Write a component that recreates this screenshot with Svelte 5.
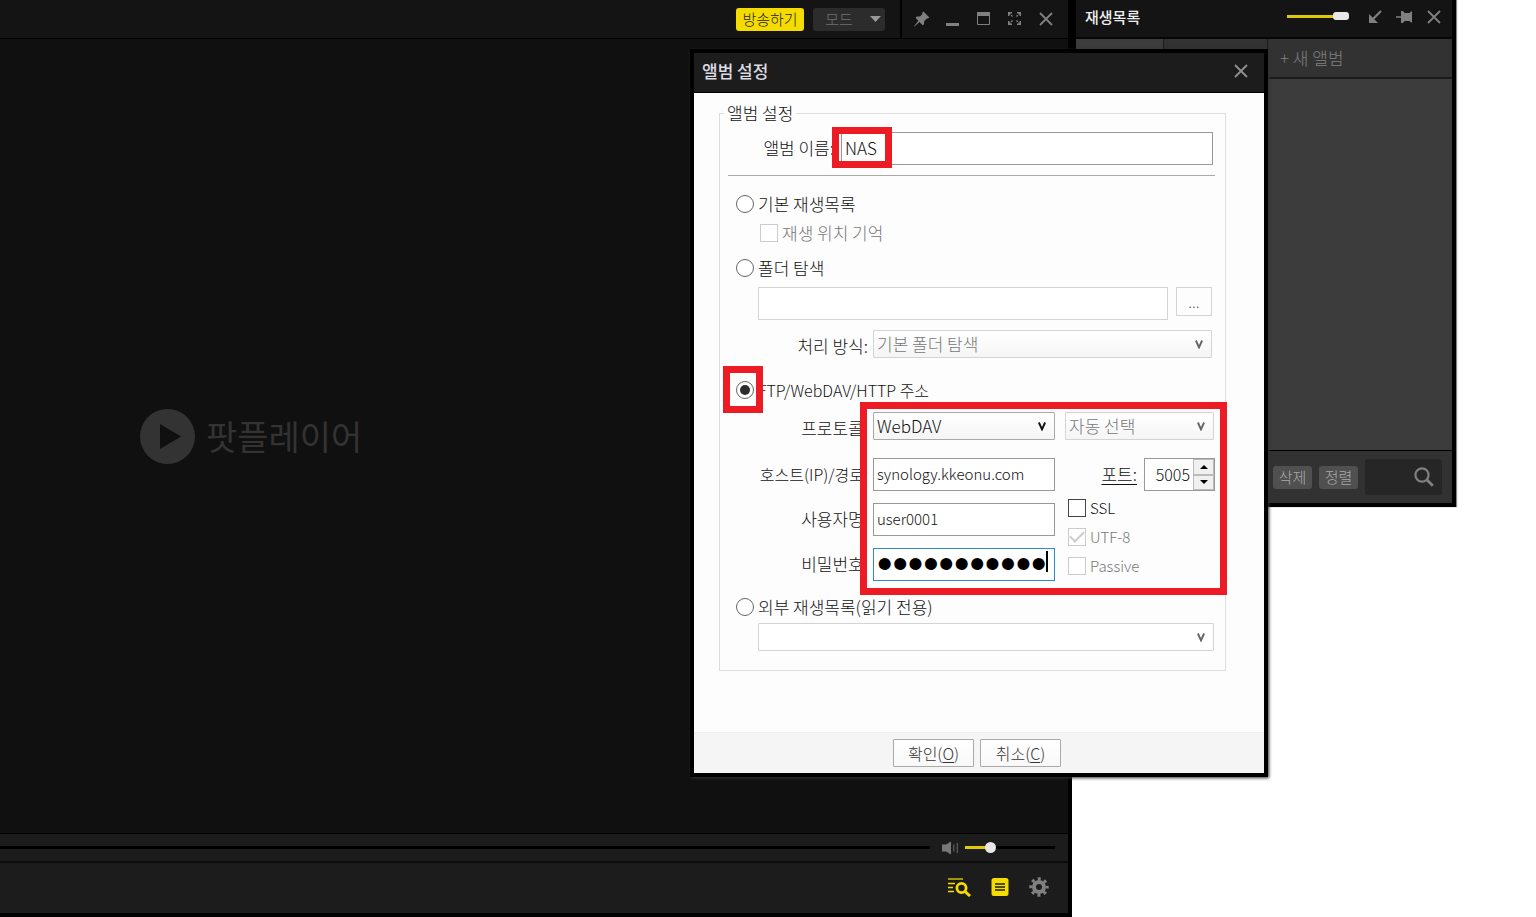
<script lang="ts">
	let source = $state('remote');
	let albumName = $state('NAS');
	let folderPath = $state('');
	let protocol = $state('WebDAV');
	let host = $state('synology.kkeonu.com');
	let port = $state(5005);
	let user = $state('user0001');
	let password = $state('abcdefghijk');
	let ssl = $state(false);
</script>

{#snippet cross()}
	<svg width="16" height="16" viewBox="0 0 16 16" fill="none" stroke="currentColor" stroke-width="1.8">
		<path d="M2 2l12 12M14 2L2 14" />
	</svg>
{/snippet}

{#snippet chevron()}
	<svg class="chevron" width="8" height="9" viewBox="0 0 8 9" fill="none" stroke="currentColor" stroke-width="1.9">
		<path d="M0.9 0.5L4 7.4L7.1 0.5" />
	</svg>
{/snippet}

<div class="desktop">
	<!-- player -->
	<main class="player">
		<header class="titlebar">
			<button class="live">방송하기</button>
			<button class="mode">
				<span>모드</span>
				<svg width="11" height="6" viewBox="0 0 11 6" fill="#999"><path d="M0 0h11L5.5 6z" /></svg>
			</button>
			<div class="controls">
				<button aria-label="항상 위">
					<svg width="16" height="16" viewBox="0 0 16 16" fill="currentColor">
						<path d="M9.4 0.6L15.4 6.4L13.8 7.6L12.8 7.4L10.2 10.2L10 13.2L8.6 14.2L5.4 11L0.6 15.4L0.2 15L4.4 9.8L1.6 7L2.8 5.6L6 5.6L8.4 3L8.2 1.8z" />
					</svg>
				</button>
				<button aria-label="최소화">
					<svg width="16" height="16" viewBox="0 0 16 16" fill="currentColor"><path d="M1 12h13v3H1z" /></svg>
				</button>
				<button aria-label="최대화">
					<svg width="16" height="16" viewBox="0 0 16 16" fill="none" stroke="currentColor">
						<path d="M1.5 1.5h12v12h-12z" /><path d="M1 3h13" stroke-width="4" />
					</svg>
				</button>
				<button aria-label="전체 화면">
					<svg width="16" height="16" viewBox="0 0 16 16" fill="none" stroke="currentColor" stroke-width="1.4">
						<path d="M1.7 5V1.7H5M10 1.7h3.3V5M13.3 10v3.3H10M5 13.3H1.7V10" />
						<path d="M2 2l4 4M13 2L9 6M13 13L9 9M2 13l4-4" stroke-dasharray="2 1" />
					</svg>
				</button>
				<button aria-label="닫기">{@render cross()}</button>
			</div>
		</header>

		<div class="video">
			<svg width="55" height="55" viewBox="0 0 55 55">
				<circle cx="27.5" cy="27.5" r="27.5" fill="#333" />
				<path d="M20 15l21 12.5L20 40z" fill="#101010" />
			</svg>
			<span>팟플레이어</span>
		</div>

		<div class="seek">
			<input class="seekbar" type="range" min="0" max="100" value="0" aria-label="재생 위치" />
			<svg width="17" height="14" viewBox="0 0 17 14" fill="#777">
				<path d="M0 3.5h4L9 0.5v13L4 10.5H0z" />
				<path d="M11 3.5h1.4v7H11zM14.6 2h1.4v10h-1.4z" fill="#555" />
			</svg>
			<input class="volume" type="range" min="0" max="100" value="25" aria-label="음량" />
		</div>

		<footer class="toolbar">
			<button class="yellow" aria-label="찾기">
				<svg width="24" height="20" viewBox="0 0 24 20" fill="none" stroke="currentColor">
					<path d="M1 2h15" stroke="#a39406" stroke-width="2" />
					<path d="M1 6.5h7M1 10.5h5M1 14.5h6" stroke-width="1.4" />
					<circle cx="14.5" cy="11" r="4.6" stroke-width="2.8" />
					<path d="M18 14.5l5 4.5" stroke-width="3" />
				</svg>
			</button>
			<button class="yellow" aria-label="재생목록">
				<svg width="18" height="18" viewBox="0 0 18 18" fill="currentColor">
					<rect x="0.5" width="17" height="18" rx="2.5" />
					<path d="M4 6h10M4 9h10M4 12h10" stroke="#1c1c1c" stroke-width="1.5" />
				</svg>
			</button>
			<button aria-label="환경 설정">
				<svg width="20" height="20" viewBox="0 0 20 20" fill="none" stroke="currentColor">
					<circle cx="10" cy="10" r="8.2" stroke-width="3" stroke-dasharray="3 3.44" stroke-dashoffset="1.5" />
					<circle cx="10" cy="10" r="5" stroke-width="4" />
				</svg>
			</button>
		</footer>
	</main>

	<!-- playlist -->
	<aside class="playlist">
		<header class="list-title">
			<strong>재생목록</strong>
			<input class="opacity" type="range" min="0" max="100" value="100" aria-label="투명도" />
			<button aria-label="접기">
				<svg width="14" height="14" viewBox="0 0 14 14" fill="none" stroke="currentColor" stroke-width="2.2">
					<path d="M13 1L4 10" /><path d="M1 4v9h9z" fill="currentColor" stroke="none" />
				</svg>
			</button>
			<button aria-label="고정">
				<svg width="16" height="14" viewBox="0 0 16 14" fill="currentColor">
					<path d="M0 6.3h5V1h2l1.5 2h5L15 1.5h1v11h-1L13.5 11h-5L7 13H5V7.7H0z" />
				</svg>
			</button>
			<button aria-label="닫기">{@render cross()}</button>
		</header>
		<nav class="tabs">
			<button class="active" aria-label="기본 앨범"></button>
			<button aria-label="앨범"></button>
			<button class="new">+ 새 앨범</button>
		</nav>
		<div class="items"></div>
		<footer class="list-tools">
			<button>삭제</button>
			<button>정렬</button>
			<button class="search" aria-label="검색">
				<svg width="20" height="20" viewBox="0 0 20 20" fill="none" stroke="currentColor">
					<circle cx="8" cy="8" r="6.6" stroke-width="2.2" /><path d="M12.8 12.8l6 6" stroke-width="2.8" />
				</svg>
			</button>
		</footer>
	</aside>

	<!-- album settings -->
	<div class="dialog" role="dialog" aria-labelledby="dialog-title">
		<header class="dialog-title">
			<strong id="dialog-title">앨범 설정</strong>
			<button aria-label="닫기">{@render cross()}</button>
		</header>

		<fieldset>
			<legend>앨범 설정</legend>

			<div class="row name">
				<label for="album">앨범 이름:</label>
				<input id="album" type="text" bind:value={albumName} />
			</div>
			<hr />

			<label class="choice basic"><input type="radio" value="basic" bind:group={source} />기본 재생목록</label>
			<label class="choice remember off"><input type="checkbox" disabled />재생 위치 기억</label>
			<label class="choice folder"><input type="radio" value="folder" bind:group={source} />폴더 탐색</label>
			<div class="row browse">
				<input type="text" aria-label="폴더" bind:value={folderPath} disabled />
				<button disabled>...</button>
			</div>
			<div class="row method">
				<label for="method">처리 방식:</label>
				<div class="select off">
					<select id="method" disabled><option>기본 폴더 탐색</option></select>
					{@render chevron()}
				</div>
			</div>

			<label class="choice remote"><input type="radio" value="remote" bind:group={source} />FTP/WebDAV/HTTP 주소</label>
			<div class="row protocol">
				<label for="protocol">프로토콜:</label>
				<div class="select">
					<select id="protocol" bind:value={protocol}>
						<option>FTP</option>
						<option>WebDAV</option>
						<option>HTTP</option>
					</select>
					{@render chevron()}
				</div>
				<div class="select off">
					<select aria-label="인코딩" disabled><option>자동 선택</option></select>
					{@render chevron()}
				</div>
			</div>

			<div class="server">
				<div class="login">
					<label class="host" for="host">호스트(IP)/경로:</label>
					<input id="host" type="text" bind:value={host} />
					<label for="user">사용자명:</label>
					<input id="user" type="text" bind:value={user} />
					<label for="password">비밀번호:</label>
					<div class="password">
						<input id="password" type="password" bind:value={password} />
						<span class="caret"></span>
					</div>
				</div>
				<div class="options">
					<div class="port">
						<label for="port">포트:</label>
						<div class="spinner">
							<input id="port" type="number" bind:value={port} />
							<div class="steps">
								<button aria-label="증가" onclick={() => port++}>
									<svg width="8" height="4" viewBox="0 0 8 4"><path d="M0 4h8L4 0z" /></svg>
								</button>
								<button aria-label="감소" onclick={() => port--}>
									<svg width="8" height="4" viewBox="0 0 8 4"><path d="M0 0h8L4 4z" /></svg>
								</button>
							</div>
						</div>
					</div>
					<label class="choice"><input type="checkbox" bind:checked={ssl} />SSL</label>
					<label class="choice off"><input type="checkbox" checked disabled />UTF-8</label>
					<label class="choice off"><input type="checkbox" disabled />Passive</label>
				</div>
			</div>

			<label class="choice external"><input type="radio" value="external" bind:group={source} />외부 재생목록(읽기 전용)</label>
			<div class="select off list">
				<select aria-label="외부 재생목록" disabled><option></option></select>
				{@render chevron()}
			</div>
		</fieldset>

		<footer class="actions">
			<button>확인(<u>O</u>)</button>
			<button>취소(<u>C</u>)</button>
		</footer>

		<div class="mark mark-name"></div>
		<div class="mark mark-radio"></div>
		<div class="mark mark-server"></div>
	</div>
</div>

<style>
	:global(body) {
		margin: 0;
		background: #fff;
	}

	* {
		box-sizing: border-box;
	}

	.desktop {
		position: relative;
		min-height: 100vh;
		overflow: hidden;
		font-family: 'Noto Sans CJK KR', sans-serif;
		font-size: 17px;
		font-weight: 300;
		line-height: 24px;
	}

	button,
	input,
	select {
		margin: 0;
		padding: 0;
		font: inherit;
		color: inherit;
	}

	button {
		display: flex;
		align-items: center;
		justify-content: center;
		border: 0;
		background: none;
	}

	svg {
		display: block;
		flex: none;
	}

	/* sliders */
	input[type='range'] {
		appearance: none;
		height: 12px;
		background: none;
	}

	input[type='range']::-webkit-slider-runnable-track {
		height: 3px;
		background: #000;
	}

	input[type='range']::-webkit-slider-thumb {
		appearance: none;
		background: #e8e8e8;
	}

	/* player window */
	.player {
		display: flex;
		flex-direction: column;
		width: calc(100% - 464px);
		height: 100vh;
		border: solid #000;
		border-width: 0 4px 4px 0;
		background: #101010;
		color: #808080;
	}

	.titlebar {
		display: flex;
		align-items: center;
		justify-content: flex-end;
		height: 39px;
		border-bottom: 1px solid #000;
		background: #141414;
		font-size: 15px;
	}

	.live {
		width: 68px;
		height: 23px;
		margin-right: 9px;
		border-radius: 3px;
		background: #f5dc00;
		color: #222;
	}

	.mode {
		gap: 17px;
		width: 72px;
		height: 23px;
		padding-left: 8px;
		margin-right: 15px;
		border-radius: 3px;
		background: #2c2c2c;
		color: #707070;
	}

	.controls {
		display: flex;
		align-items: center;
		gap: 15px;
		height: 100%;
		padding: 0 14px 0 12px;
		border-left: 2px solid #000;
	}

	.video {
		display: flex;
		flex: 1;
		align-items: center;
		gap: 11px;
		padding-left: 140px;
		color: #333;
		font-size: 34px;
		font-weight: 400;
	}

	.seek {
		display: flex;
		align-items: center;
		height: 28px;
		border-top: 1px solid #000;
		background: #1c1c1c;
	}

	.seekbar {
		flex: 1;
		margin-right: 12px;
	}

	input.seekbar::-webkit-slider-thumb {
		width: 0;
		height: 0;
	}

	.volume {
		width: 90px;
		margin: 0 13px 0 6px;
	}

	input.volume[type='range']::-webkit-slider-runnable-track {
		background: linear-gradient(to right, #e0ca08 28%, #000 28%);
	}

	input.volume::-webkit-slider-thumb {
		width: 11px;
		height: 11px;
		margin-top: -4px;
		border-radius: 50%;
	}

	.toolbar {
		display: flex;
		align-items: center;
		justify-content: flex-end;
		gap: 20px;
		height: 52px;
		padding: 0 19px 2px 0;
		border-top: 2px solid #0c0c0c;
		background: #1c1c1c;
	}

	.yellow {
		color: #f5dc00;
	}

	/* playlist window */
	.playlist {
		position: absolute;
		top: 0;
		right: 80px;
		display: flex;
		flex-direction: column;
		width: 384px;
		height: 507px;
		border: solid #000;
		border-width: 0 4px 4px;
		background: #3c3c3c;
		color: #808080;
		box-shadow: 1px 0 1px #888;
	}

	.list-title {
		display: flex;
		align-items: center;
		height: 39px;
		padding: 0 10px 4px 9px;
		gap: 14px;
		border-bottom: 2px solid #060606;
		background: #141414;
		font-size: 15px;
	}

	.list-title strong {
		flex: 1;
		color: #eee;
		font-weight: 500;
	}

	.opacity {
		width: 62px;
		margin-right: 5px;
	}

	input.opacity[type='range']::-webkit-slider-runnable-track {
		background: #e0ca08;
	}

	input.opacity::-webkit-slider-thumb {
		width: 16px;
		height: 8px;
		margin-top: -3px;
		border-radius: 3px;
	}

	.tabs {
		display: flex;
		height: 40px;
		border-bottom: 2px solid #1c1c1c;
		background: #323232;
	}

	.tabs button {
		width: 104px;
		border-right: 1px solid #1c1c1c;
	}

	.tabs .active {
		width: 88px;
		background: #3c3c3c;
	}

	.tabs .new {
		flex: 1;
		justify-content: flex-start;
		padding-left: 12px;
		border: 0;
	}

	.items {
		flex: 1;
	}

	.list-tools {
		display: flex;
		align-items: center;
		justify-content: flex-end;
		gap: 7px;
		height: 53px;
		padding-right: 10px;
		border-top: 1px solid #000;
		background: #323232;
		font-size: 15px;
	}

	.list-tools button {
		width: 39px;
		height: 23px;
		border-radius: 3px;
		background: #505050;
		color: #aaa;
	}

	.list-tools .search {
		justify-content: flex-end;
		width: 77px;
		height: 36px;
		padding-right: 8px;
		background: #262626;
		color: #808080;
	}

	/* dialog */
	.dialog {
		position: absolute;
		top: 49px;
		right: 268px;
		width: 578px;
		border: 4px solid #000;
		background: #fdfdfd;
		color: #111;
		box-shadow: 1px 1px 3px #333;
	}

	.dialog-title {
		display: flex;
		align-items: center;
		justify-content: space-between;
		height: 40px;
		padding: 0 15px 4px 8px;
		border-bottom: 1px solid #000;
		background: #1c1c1c;
		color: #909090;
	}

	.dialog-title strong {
		color: #dcdce4;
		font-weight: 500;
	}

	fieldset {
		min-width: 0;
		margin: 8px 38px 61px 25px;
		padding: 0 10px 19px 8px;
		border: 1px solid #ddd;
	}

	legend {
		margin-left: -4px;
		padding: 0 3px;
	}

	.row {
		display: flex;
	}

	.row label,
	.login label {
		text-align: right;
		white-space: nowrap;
		line-height: 32px;
	}

	input[type='text'],
	input[type='password'],
	input[type='number'] {
		min-width: 0;
		height: 33px;
		padding: 0 3px 2px;
		border: 1px solid #999;
		border-radius: 0;
		outline: 0;
		background: #fff;
	}

	input[type='text']:disabled {
		border-color: #d4d4d4;
	}

	.name {
		gap: 7px;
		margin-top: 7px;
		padding-right: 2px;
	}

	.name label {
		width: 106px;
	}

	.name input {
		flex: 1;
	}

	hr {
		margin: 10px 0 0;
		border: 0;
		border-top: 1px solid #aaa;
	}

	.choice {
		display: flex;
		align-items: center;
		gap: 4px;
		height: 24px;
		padding-left: 8px;
	}

	.choice.off {
		color: #777;
	}

	.choice input {
		display: grid;
		place-items: center;
		appearance: none;
		width: 18px;
		height: 18px;
		border: 1px solid #444;
		background: #fff;
	}

	.choice input[type='radio'] {
		border-color: #666;
		border-radius: 50%;
	}

	.choice input[type='radio']:checked::before {
		width: 10px;
		height: 10px;
		border-radius: 50%;
		background: #2c2c2c;
		content: '';
	}

	.choice input:disabled {
		border-color: #ccc;
	}

	.choice input[type='checkbox']:checked::before {
		width: 12px;
		height: 6px;
		border: solid #ccc;
		border-width: 0 0 2px 2px;
		transform: translateY(-2px) rotate(-45deg);
		content: '';
	}

	.basic {
		margin-top: 16px;
	}

	.remember {
		margin-top: 5px;
		padding-left: 32px;
	}

	.folder {
		margin-top: 11px;
	}

	.browse {
		gap: 8px;
		margin-top: 7px;
		padding: 0 3px 0 30px;
	}

	.browse input {
		flex: 1;
	}

	.browse button {
		width: 36px;
		height: 29px;
		border: 1px solid #d4d4d4;
		color: #555;
		font-size: 15px;
	}

	.select {
		position: relative;
		height: 28px;
	}

	.select select {
		display: block;
		appearance: none;
		width: 100%;
		height: 100%;
		padding: 0 20px 0 3px;
		border: 1px solid #aaa;
		border-radius: 1px;
		background: linear-gradient(#fff, #f5f5f5);
		opacity: 1;
	}

	.select.off {
		color: #777;
	}

	.select.off select {
		border-color: #d4d4d4;
	}

	.select :global(.chevron) {
		position: absolute;
		top: 10px;
		right: 9px;
	}

	.select.off :global(.chevron) {
		color: #666;
	}

	.method {
		gap: 5px;
		height: 28px;
		margin-top: 10px;
		padding-right: 3px;
	}

	.method label {
		width: 140px;
	}

	.method .select {
		flex: 1;
	}

	.remote {
		margin-top: 20px;
		font-size: 16px;
	}

	.protocol {
		display: grid;
		grid-template-columns: 140px 182px 1fr;
		column-gap: 5px;
		height: 28px;
		margin-top: 10px;
	}

	.protocol .off {
		margin: 0 1px 0 5px;
	}

	.server {
		display: flex;
		gap: 13px;
		margin-top: 18px;
	}

	.login {
		display: grid;
		grid-template-columns: 140px 182px;
		gap: 12px 5px;
	}

	.login .host {
		font-size: 16px;
	}

	.login input {
		font-size: 15px;
	}

	.password {
		position: relative;
	}

	.password input {
		display: block;
		width: 100%;
		border-color: #2a8ad4;
		color: #000;
		font-family: 'Liberation Sans', sans-serif;
		font-size: 44px;
	}

	.caret {
		position: absolute;
		top: 3px;
		right: 7px;
		width: 2px;
		height: 21px;
		background: #000;
	}

	.options {
		display: flex;
		flex: 1;
		flex-direction: column;
		gap: 5px;
	}

	.options .choice {
		padding: 0;
		font-size: 15px;
	}

	.port {
		display: flex;
		justify-content: flex-end;
		gap: 7px;
		line-height: 32px;
	}

	.port label {
		text-decoration: underline;
		text-underline-offset: 3px;
	}

	.spinner {
		display: flex;
		width: 71px;
		height: 33px;
		border: 1px solid #999;
	}

	.spinner input[type='number'] {
		flex: 1;
		height: 31px;
		border: 0;
		appearance: textfield;
		font-size: 16px;
		text-align: right;
	}

	.spinner input::-webkit-inner-spin-button {
		display: none;
	}

	.steps {
		display: flex;
		flex-direction: column;
		width: 21px;
	}

	.steps button {
		flex: 1;
		border: 1px solid #bbb;
		background: #f0f0f0;
	}

	.external {
		margin-top: 14px;
	}

	.list {
		margin: 4px 1px 0 30px;
	}

	.list select {
		background: #fff;
	}

	.actions {
		display: flex;
		justify-content: center;
		gap: 6px;
		height: 41px;
		padding: 6px 4px 0 0;
		border-top: 1px solid #eee;
		background: #f5f5f5;
		font-size: 16px;
	}

	.actions button {
		width: 81px;
		height: 28px;
		border: 1px solid #aaa;
		border-radius: 1px;
		background: linear-gradient(#fff, #f8f8f8);
		color: #333;
	}

	u {
		text-underline-offset: 2px;
	}

	/* red highlights over the filled-in fields */
	.mark {
		position: absolute;
		border: 7px solid #ed1c24;
		pointer-events: none;
	}

	.mark-name {
		top: 74px;
		left: 138px;
		width: 60px;
		height: 41px;
	}

	.mark-radio {
		top: 313px;
		left: 29px;
		width: 40px;
		height: 47px;
	}

	.mark-server {
		top: 349px;
		left: 166px;
		width: 367px;
		height: 193px;
	}
</style>
